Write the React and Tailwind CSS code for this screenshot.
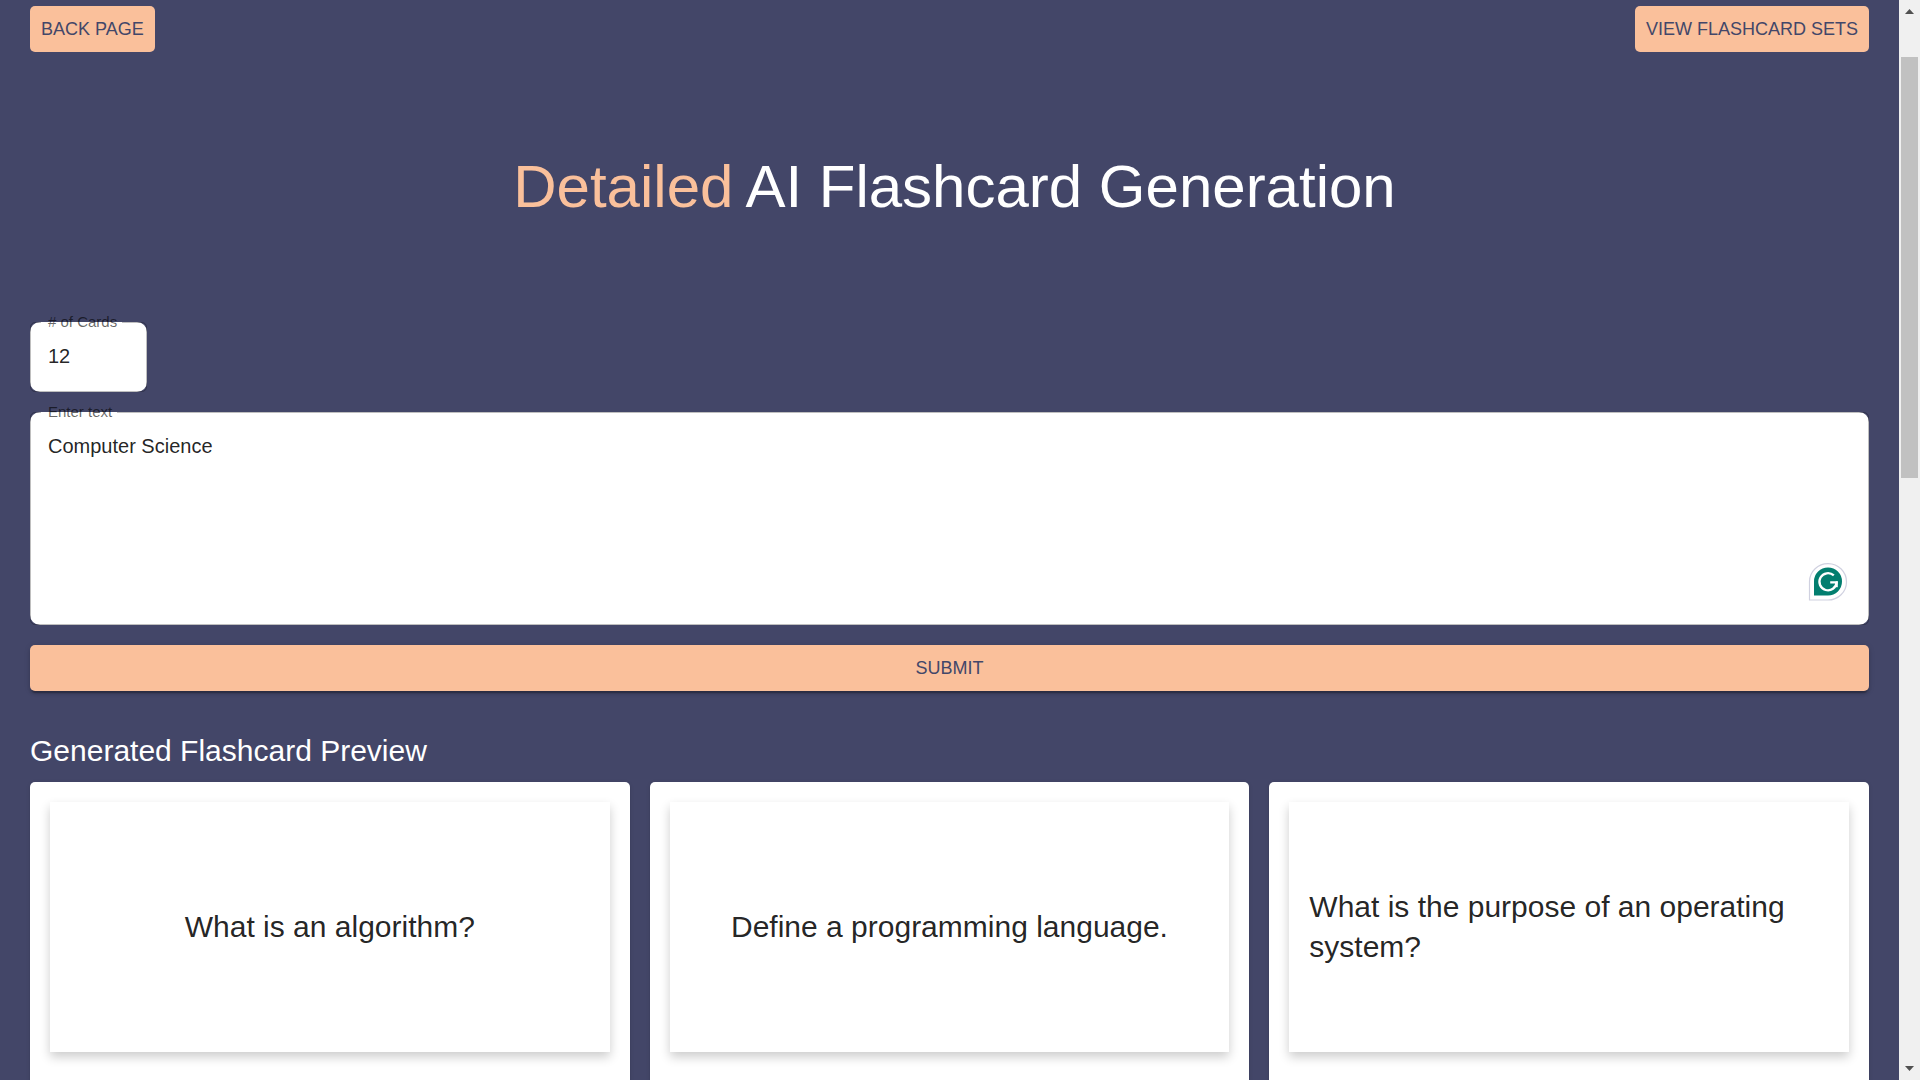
const cards = [
  'What is an algorithm?',
  'Define a programming language.',
  'What is the purpose of an operating system?',
];

const buttonStyle = 'h-[46px] rounded-[5px] bg-[#fac09b] text-lg uppercase text-[#424769]';

function OutlinedField({ id, label, children }) {
  return (
    <div className="relative rounded-[10px] bg-white">
      {children}
      <fieldset
        aria-hidden="true"
        className="pointer-events-none absolute inset-x-0 -top-2 bottom-0 rounded-[5px] border border-black/25 px-2.5"
      >
        <legend className="invisible h-4 px-1.5 text-[15px] leading-4">{label}</legend>
      </fieldset>
      <label htmlFor={id} className="absolute -top-2.5 left-[18px] text-[15px] leading-5 text-black/60">
        {label}
      </label>
    </div>
  );
}

function AssistantBadge() {
  return (
    <button type="button" aria-label="Writing assistant" className="absolute right-[21px] bottom-6">
      <svg width="40" height="39" viewBox="0 0 40 39" fill="none">
        <path d="M1.5 38V19.5A18.5 18.2 0 1 1 20 38Z" fill="#fff" stroke="#d0d1e0" strokeWidth="1.2" />
        <path d="M6 33.5V19.5A14 14 0 1 1 20 33.5Z" fill="#027e6f" />
        <path d="M25.8 13.4A8.6 8.6 0 1 0 28.6 20.3H22.2" stroke="#fff" strokeWidth="2.3" />
        <path d="M28.8 19.3V25.2" stroke="#fff" strokeWidth="2" />
      </svg>
    </button>
  );
}

function ScrollRail() {
  return (
    <div aria-hidden="true" className="flex w-[21px] shrink-0 flex-col items-center bg-[#f0f0f0]">
      <svg className="h-[57px] w-[9px] shrink-0" viewBox="0 0 9 57">
        <path d="M0 14L4.5 9L9 14Z" fill="#505050" />
      </svg>
      <div className="h-[39%] w-[17px] bg-[#c1c1c1]" />
      <svg className="mt-auto h-[21px] w-[9px] shrink-0" viewBox="0 0 9 21">
        <path d="M0 7L4.5 12L9 7Z" fill="#505050" />
      </svg>
    </div>
  );
}

export default function App() {
  return (
    <div className="flex h-screen overflow-hidden bg-[#434668] font-['Liberation_Sans',Arial,sans-serif]">
      <main className="h-full min-w-0 flex-1 overflow-hidden px-[30px] pt-1.5">
        <nav className="flex justify-between">
          <button type="button" className={`${buttonStyle} px-[11px]`}>Back Page</button>
          <button type="button" className={`${buttonStyle} px-[11px]`}>View Flashcard Sets</button>
        </nav>

        <h1 className="mt-[100px] flex justify-center gap-3 pl-2.5 text-[60px] leading-[70px] text-white">
          <span className="text-[#fac09b]">Detailed</span> <span>AI Flashcard Generation</span>
        </h1>

        <form className="mt-[100px] flex flex-col gap-5">
          <div className="w-[117px]">
            <OutlinedField id="count" label="# of Cards">
              <input id="count" defaultValue="12" className="block h-[70px] w-full bg-transparent px-[18px] pb-0.5 text-xl text-black/87 outline-none" />
            </OutlinedField>
          </div>
          <div className="relative">
            <OutlinedField id="topic" label="Enter text">
              <textarea
                id="topic"
                defaultValue="Computer Science"
                className="block h-[213px] w-full resize-none bg-transparent px-[18px] py-5 text-xl text-black/87 outline-none"
              />
            </OutlinedField>
            <AssistantBadge />
          </div>
          <button
            type="button"
            className={`${buttonStyle} w-full shadow-[0_4px_1px_-2px_rgba(0,0,0,0.2),0_3px_3px_0_rgba(0,0,0,0.14),0_1px_6px_0_rgba(0,0,0,0.12)]`}
          >
            Submit
          </button>
        </form>

        <section className="mt-10">
          <h2 className="text-[30px] leading-10 text-white">Generated Flashcard Preview</h2>
          <div className="mt-[11px] grid grid-cols-3 gap-5">
            {cards.map((question) => (
              <article
                key={question}
                className="h-[340px] rounded-[5px] bg-white p-5 shadow-[0_3px_1px_-1px_rgba(0,0,0,0.2),0_1px_1px_0_rgba(0,0,0,0.14),0_1px_4px_0_rgba(0,0,0,0.12)]"
              >
                <div className="flex h-[250px] items-center justify-center p-5 shadow-[0_5px_10px_0_rgba(0,0,0,0.2)]">
                  <p className="text-[30px] leading-10 text-black/87">{question}</p>
                </div>
              </article>
            ))}
          </div>
        </section>
      </main>
      <ScrollRail />
    </div>
  );
}
